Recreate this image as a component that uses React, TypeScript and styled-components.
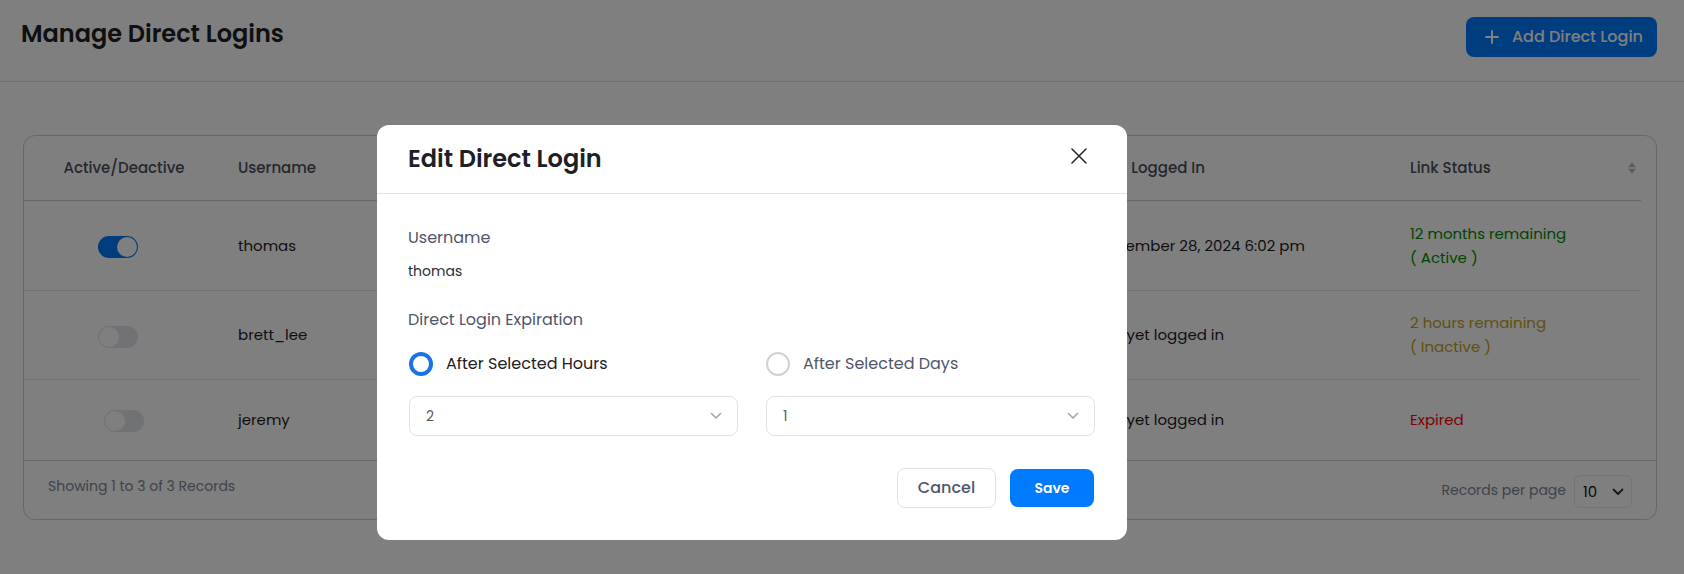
import React from 'react';
import styled, { createGlobalStyle } from 'styled-components';

const GlobalStyle = createGlobalStyle`
  *, *::before, *::after { box-sizing: border-box; }
  body {
    margin: 0;
    background: #fff;
    color: #1d2025;
    font-family: Poppins, Inter, sans-serif;
    font-size: 15px;
    line-height: 24px;
  }
  button, input, select { font: inherit; }
`;

const Page = styled.main`
  min-height: 100vh;
`;

const PageHeader = styled.header`
  display: flex;
  align-items: flex-start;
  justify-content: space-between;
  height: 82px;
  padding: 17px 27px 0 21px;
  border-bottom: 1px solid #e0e0e3;
`;

const PageTitle = styled.h1`
  margin: 0;
  font-size: 24px;
  line-height: 34px;
  font-weight: 600;
`;

const AddButton = styled.button`
  display: flex;
  align-items: center;
  gap: 13px;
  height: 40px;
  padding: 0 14px 0 19px;
  border: 0;
  border-radius: 8px;
  background: #007bff;
  color: #fff;
  font-size: 16px;
  font-weight: 500;
`;

const Card = styled.section`
  margin: 53px 27px 0 23px;
  border: 1px solid #ccc;
  border-radius: 12px;
`;

const TableWrap = styled.div`
  padding-right: 15px;
`;

const Table = styled.table`
  width: 100%;
  border-collapse: separate;
  border-spacing: 0;
  table-layout: fixed;
`;

const HeadCell = styled.th<{ $width?: number; $center?: boolean }>`
  width: ${({ $width }) => ($width ? `${$width}px` : 'auto')};
  height: 65px;
  padding: 0 5px 0 14px;
  border-bottom: 1px solid #ccc;
  color: #494f5c;
  font-weight: 500;
  text-align: ${({ $center }) => ($center ? 'center' : 'left')};
  ${({ $center }) => $center && 'padding: 0;'}
`;

const HeadLabel = styled.div`
  display: flex;
  align-items: center;
  justify-content: space-between;
`;

const Cell = styled.td<{ $last?: boolean }>`
  height: ${({ $last }) => ($last ? 80 : 89)}px;
  padding: 0 0 0 14px;
  border-bottom: ${({ $last }) => ($last ? '0' : '1px solid #dedede')};

  tr:first-child > & { height: 90px; }
`;

const ToggleCell = styled(Cell)`
  padding: ${({ $last }) => ($last ? '0' : '2px 12px 0 0')};
  text-align: center;
`;

const Toggle = styled.input`
  appearance: none;
  display: inline-flex;
  width: 40px;
  height: 22px;
  margin: 0;
  padding: 1px;
  border-radius: 11px;
  background: #e0e5ea;
  vertical-align: middle;

  &::before {
    content: '';
    width: 20px;
    height: 20px;
    border-radius: 50%;
    background: #fff;
  }
  &:checked {
    justify-content: flex-end;
    background: #007bff;
  }
`;

const Status = styled.span<{ $color: string }>`
  display: block;
  color: ${({ $color }) => $color};
  white-space: pre-line;
`;

const CardFooter = styled.footer`
  display: flex;
  justify-content: space-between;
  height: 59px;
  padding: 14px 24px 0;
  border-top: 1px solid #ccc;
  color: #7c8594;
  font-size: 14px;
  line-height: 22px;
`;

const PerPage = styled.label`
  display: flex;
  align-items: flex-start;
  gap: 8px;
  height: 33px;
  line-height: 30px;
`;

const SelectBox = styled.span<{ $compact?: boolean }>`
  position: relative;
  display: block;
  width: ${({ $compact }) => ($compact ? '58px' : '100%')};

  svg {
    position: absolute;
    top: 50%;
    right: ${({ $compact }) => ($compact ? 8 : 16)}px;
    transform: translateY(-50%);
    pointer-events: none;
  }
`;

const Select = styled.select<{ $compact?: boolean }>`
  appearance: none;
  display: block;
  width: 100%;
  height: ${({ $compact }) => ($compact ? 33 : 40)}px;
  padding: 0 ${({ $compact }) => ($compact ? 8 : 16)}px;
  border: 1px solid ${({ $compact }) => ($compact ? '#e9e9ea' : '#e1e1e4')};
  border-radius: ${({ $compact }) => ($compact ? 6 : 8)}px;
  background: transparent;
  color: ${({ $compact }) => ($compact ? '#111' : '#555b66')};
  font-size: ${({ $compact }) => ($compact ? 15 : 14)}px;
`;

const Overlay = styled.div`
  position: fixed;
  inset: 0;
  display: flex;
  align-items: flex-start;
  justify-content: center;
  padding: 125px 200px 20px 20px;
  background: rgba(0, 0, 0, 0.5);
`;

const Dialog = styled.section`
  width: 100%;
  max-width: 750px;
  border-radius: 12px;
  background: #fff;
`;

const DialogHeader = styled.header`
  display: flex;
  align-items: flex-start;
  justify-content: space-between;
  height: 69px;
  padding: 17px 36px 0 31px;
  border-bottom: 1px solid #dfe1e4;
`;

const DialogTitle = styled.h2`
  margin: 0;
  font-size: 24px;
  line-height: 34px;
  font-weight: 600;
`;

const CloseButton = styled.button`
  display: flex;
  align-items: center;
  justify-content: center;
  width: 24px;
  height: 28px;
  padding: 0;
  border: 0;
  background: none;
  color: #222428;
`;

const DialogBody = styled.form`
  padding: 32px 33px 32px 31px;
`;

const FieldLabel = styled.div`
  color: #50566a;
  font-size: 16px;
`;

const FieldValue = styled.div`
  margin: 9px 0 25px;
  color: #2a2d33;
  font-size: 14px;
`;

const Options = styled.div`
  display: grid;
  grid-template-columns: 1fr 1fr;
  gap: 28px;
  margin: 20px -1px 0 1px;
`;

const RadioLabel = styled.label`
  display: flex;
  align-items: center;
  gap: 13px;
  margin-bottom: 20px;
  color: #50566a;
  font-size: 16px;

  &:has(input:checked) { color: #1d2025; }
`;

const Radio = styled.input`
  appearance: none;
  flex: none;
  width: 24px;
  height: 24px;
  margin: 0;
  border: 2px solid #cfd0d8;
  border-radius: 50%;

  &:checked { border: 4px solid #1a73e8; }
`;

const Actions = styled.div`
  display: flex;
  align-items: center;
  justify-content: flex-end;
  gap: 14px;
  margin-top: 32px;
`;

const CancelButton = styled.button`
  width: 99px;
  height: 40px;
  padding: 0;
  border: 1px solid #e1e1e4;
  border-radius: 8px;
  background: #fff;
  color: #50566a;
  font-size: 16px;
  font-weight: 500;
`;

const SaveButton = styled.button`
  width: 84px;
  height: 38px;
  padding: 0;
  border: 0;
  border-radius: 8px;
  background: #007bff;
  color: #fff;
  font-size: 14px;
  font-weight: 600;
`;

const Chevron = ({ size, color, weight }: { size: number; color: string; weight: number }) => (
  <svg width={size} height={size} viewBox="0 0 12 12" fill="none" stroke={color} strokeWidth={weight} aria-hidden="true">
    <path d="M1.5 3.5 6 8l4.5-4.5" strokeLinecap="round" strokeLinejoin="round" />
  </svg>
);

const SortIcon = () => (
  <svg width="8" height="12" viewBox="0 0 8 12" fill="#b9bbc0" aria-hidden="true">
    <path d="M4 0 8 5.3H0zM0 6.7h8L4 12z" />
  </svg>
);

const logins = [
  { user: 'thomas', active: true, seen: 'November 28, 2024 6:02 pm', status: '12 months remaining\n( Active )', color: '#008a00' },
  { user: 'brett_lee', active: false, seen: 'Not yet logged in', status: '2 hours remaining\n( Inactive )', color: '#c4a01a' },
  { user: 'jeremy', active: false, seen: 'Not yet logged in', status: 'Expired', color: '#ff0000' },
];

export default function App() {
  return (
    <>
      <GlobalStyle />
      <Page>
        <PageHeader>
          <PageTitle>Manage Direct Logins</PageTitle>
          <AddButton type="button">
            <svg width="14" height="14" viewBox="0 0 14 14" fill="none" stroke="currentColor" strokeWidth="2" strokeLinecap="round" aria-hidden="true">
              <path d="M7 1v12M1 7h12" />
            </svg>
            Add Direct Login
          </AddButton>
        </PageHeader>

        <Card>
          <TableWrap>
            <Table>
              <thead>
                <tr>
                  <HeadCell $width={200} $center>Active/Deactive</HeadCell>
                  <HeadCell>Username</HeadCell>
                  <HeadCell $width={313}>Last Logged In</HeadCell>
                  <HeadCell $width={245}>
                    <HeadLabel>Link Status <SortIcon /></HeadLabel>
                  </HeadCell>
                </tr>
              </thead>
              <tbody>
                {logins.map((login, i) => {
                  const last = i === logins.length - 1;
                  return (
                    <tr key={login.user}>
                      <ToggleCell $last={last}>
                        <Toggle type="checkbox" role="switch" aria-label={`Active: ${login.user}`} defaultChecked={login.active} />
                      </ToggleCell>
                      <Cell $last={last}>{login.user}</Cell>
                      <Cell $last={last}>{login.seen}</Cell>
                      <Cell $last={last}><Status $color={login.color}>{login.status}</Status></Cell>
                    </tr>
                  );
                })}
              </tbody>
            </Table>
          </TableWrap>
          <CardFooter>
            <span>Showing 1 to 3 of 3 Records</span>
            <PerPage>
              Records per page
              <SelectBox $compact>
                <Select $compact defaultValue="10"><option>10</option></Select>
                <Chevron size={12} color="#333" weight={1.8} />
              </SelectBox>
            </PerPage>
          </CardFooter>
        </Card>
      </Page>

      <Overlay>
        <Dialog role="dialog" aria-modal="true" aria-labelledby="dialog-title">
          <DialogHeader>
            <DialogTitle id="dialog-title">Edit Direct Login</DialogTitle>
            <CloseButton type="button" aria-label="Close">
              <svg width="16" height="16" viewBox="0 0 16 16" fill="none" stroke="currentColor" strokeWidth="1.5" strokeLinecap="round" aria-hidden="true">
                <path d="m1 1 14 14M15 1 1 15" />
              </svg>
            </CloseButton>
          </DialogHeader>
          <DialogBody>
            <FieldLabel>Username</FieldLabel>
            <FieldValue>thomas</FieldValue>
            <FieldLabel id="expiration">Direct Login Expiration</FieldLabel>
            <Options role="radiogroup" aria-labelledby="expiration">
              <div>
                <RadioLabel>
                  <Radio type="radio" name="expiration" defaultChecked />
                  After Selected Hours
                </RadioLabel>
                <SelectBox>
                  <Select aria-label="Hours" defaultValue="2"><option>2</option></Select>
                  <Chevron size={12} color="#a3a5aa" weight={1.6} />
                </SelectBox>
              </div>
              <div>
                <RadioLabel>
                  <Radio type="radio" name="expiration" />
                  After Selected Days
                </RadioLabel>
                <SelectBox>
                  <Select aria-label="Days" defaultValue="1"><option>1</option></Select>
                  <Chevron size={12} color="#a3a5aa" weight={1.6} />
                </SelectBox>
              </div>
            </Options>
            <Actions>
              <CancelButton type="button">Cancel</CancelButton>
              <SaveButton type="button">Save</SaveButton>
            </Actions>
          </DialogBody>
        </Dialog>
      </Overlay>
    </>
  );
}
